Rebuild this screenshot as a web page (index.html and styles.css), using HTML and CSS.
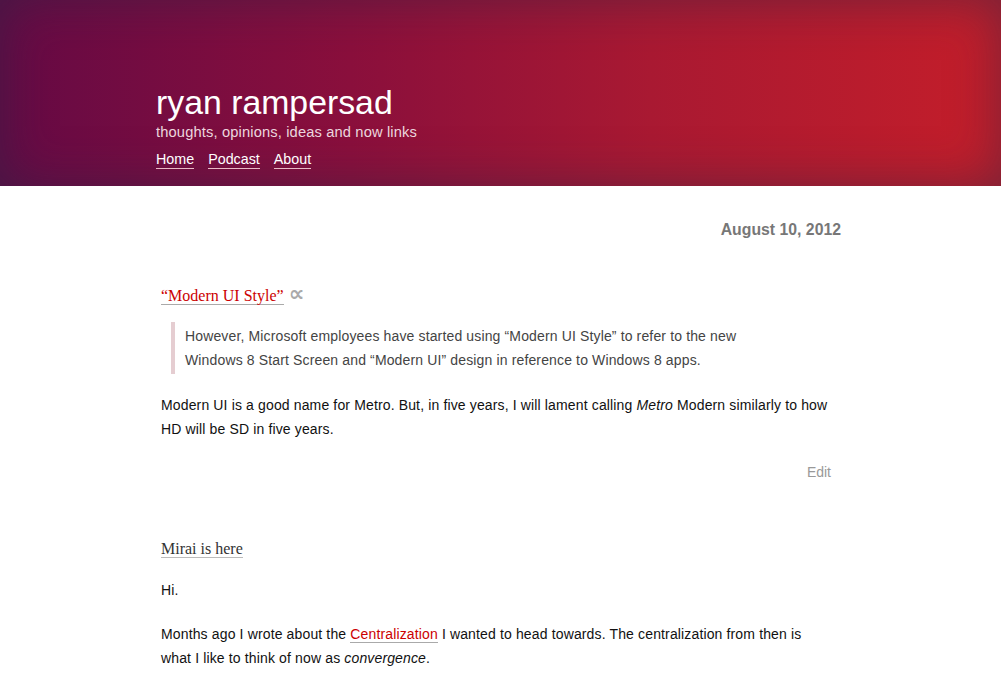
FILE: index.html
```html
<!DOCTYPE html>
<html>
<head>
<meta charset="utf-8">
<link rel="stylesheet" href="styles.css">
</head>
<body>
<header class="masthead">
  <div class="wrap">
    <h1 class="site-title">ryan rampersad</h1>
    <p class="tagline">thoughts, opinions, ideas and now links</p>
    <nav class="nav">
      <a href="#">Home</a>
      <a href="#">Podcast</a>
      <a href="#">About</a>
    </nav>
  </div>
</header>
<main class="wrap content">
  <div class="date">August 10, 2012</div>
  <article class="post">
    <h2 class="post-title"><a class="link-title" href="#">“Modern UI Style”</a> <span class="perma">∝</span></h2>
    <blockquote class="quote">
      <p>However, Microsoft employees have started using “Modern UI Style” to refer to the new Windows 8 Start Screen and “Modern UI” design in reference to Windows 8 apps.</p>
    </blockquote>
    <p>Modern UI is a good name for Metro. But, in five years, I will lament calling <em>Metro</em> Modern similarly to how HD will be SD in five years.</p>
    <div class="edit"><a href="#">Edit</a></div>
  </article>
  <article class="post">
    <h2 class="post-title"><a class="plain-title" href="#">Mirai is here</a></h2>
    <p>Hi.</p>
    <p class="p2">Months ago I wrote about the <a class="inline" href="#">Centralization</a> I wanted to head towards. The centralization from then is what I like to think of now as <em>convergence</em>.</p>
  </article>
</main>
</body>
</html>
```

FILE: styles.css
```css
html, body { margin: 0; padding: 0; background: #fff; }
body { font-family: "Liberation Sans", Arial, sans-serif; color: #111; }

.masthead {
  height: 186px;
  background: linear-gradient(90deg, #650a45 0%, #8a0f3c 35%, #a91932 65%, #c41e2a 100%);
  box-shadow: inset 0 0 50px rgba(40, 40, 70, 0.5);
  box-sizing: border-box;
  padding-top: 84px;
}
.wrap { margin-left: 156px; width: 685px; }
.site-title {
  margin: 0;
  font-weight: normal;
  font-size: 33.8px;
  line-height: 36px;
  color: #fff;
}
.tagline {
  margin: 2px 0 0;
  font-size: 14.7px;
  line-height: 20px;
  color: #ecd6de;
}
.nav { margin-top: 8px; display: flex; gap: 14px; }
.nav a {
  color: #fff;
  font-size: 14.3px;
  line-height: 18px;
  text-decoration: none;
  border-bottom: 1px solid #e9b9c6;
}

.content { padding-top: 35px; }
.date {
  text-align: right;
  font-weight: bold;
  font-size: 15.8px;
  color: #777;
  line-height: 18px;
}
.post { padding: 0 10px 0 5px; }
.post-title {
  margin: 0;
  font-family: "Liberation Serif", Georgia, serif;
  font-weight: normal;
  font-size: 16px;
  line-height: 20px;
}
.post:first-of-type .post-title { margin-top: 45px; }
.post + .post .post-title { margin-top: 55px; }
.link-title { color: #c00; text-decoration: none; border-bottom: 1px solid #aaa; }
.plain-title { color: #333; text-decoration: none; border-bottom: 1px solid #bbb; }
.perma { color: #aaa; font-family: "DejaVu Sans", sans-serif; font-size: 22px; font-weight: bold; margin-left: 1px; line-height: 20px; }

.quote {
  margin: 16px 56px 0 10px;
  border-left: 4px solid #e5cdd1;
  padding: 2px 0 2px 10px;
}
.quote p { margin: 0; color: #444; }
p { margin: 0; font-size: 14px; line-height: 24px; letter-spacing: 0.14px; }
.post > p { margin-top: 19px; }
.post > p.p2 { margin-top: 20px; }
em { font-style: italic; }
.edit { text-align: right; margin-top: 19px; font-size: 14px; line-height: 24px; }
.edit a { color: #999; text-decoration: none; }
.inline { color: #c00; text-decoration: none; border-bottom: 1px solid #aaa; }
```
